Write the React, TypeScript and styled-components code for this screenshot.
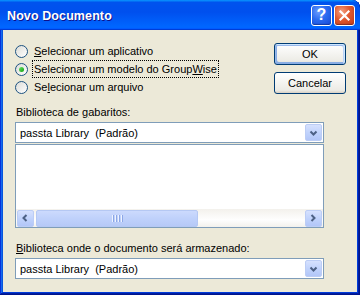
import React from "react";
import styled, { createGlobalStyle } from "styled-components";

const Global = createGlobalStyle`
  html, body { margin: 0; padding: 0; background: #ffffff; }
  body { font-family: "Liberation Sans", Arial, sans-serif; font-size: 11px; color: #000; }
  * { box-sizing: border-box; }
`;

const Window = styled.div`
  width: 360px;
  height: 295px;
  display: flex;
  flex-direction: column;
  background: #0831d9;
  border-top-right-radius: 8px;
  padding: 0 3px 3px 3px;
  box-shadow: inset -1px -1px #00138c, inset 1px 1px #0831d9, inset -2px -2px #001ea0,
    inset 2px 2px #166aee, inset -3px -3px #003bda, inset 3px 3px #0855dd;
  overflow: hidden;
`;

const TitleBar = styled.div`
  height: 30px;
  margin: 0 -3px;
  padding: 0 5px 0 7px;
  display: flex;
  align-items: center;
  gap: 2px;
  border-top-right-radius: 8px;
  background: linear-gradient(180deg, #0997ff, #0053ee 8%, #0050ee 40%, #06f 88%, #06f 93%, #005bff 95%, #003dd7 96%, #003dd7);
`;

const Title = styled.div`
  flex: 1;
  color: #fff;
  font-family: "Liberation Sans", Arial, sans-serif;
  font-weight: bold;
  font-size: 12.5px;
  letter-spacing: 0.1px;
  text-shadow: 1px 1px #0f1089;
  margin-top: 1px;
`;

const CaptionButton = styled.div<{ $kind: "help" | "close" }>`
  width: 21px;
  height: 21px;
  border: 1px solid #fff;
  border-radius: 3px;
  display: flex;
  align-items: center;
  justify-content: center;
  color: #fff;
  font-family: "Liberation Sans", Arial, sans-serif;
  font-weight: bold;
  font-size: 16px;
  background: ${(p) =>
    p.$kind === "help"
      ? "radial-gradient(circle at 35% 30%, #6b9cff 0%, #2b6bf0 45%, #1548d6 100%)"
      : "radial-gradient(circle at 35% 30%, #f5a080 0%, #e0582f 45%, #c2391a 100%)"};
  box-shadow: inset 0 -1px 1px rgba(0, 0, 40, 0.35);
`;

const Client = styled.div`
  flex: 1;
  background: #ece9d8;
  padding: 12px 11px 0 12px;
  display: flex;
  flex-direction: column;
`;

const TopSection = styled.div`
  display: flex;
  justify-content: space-between;
  height: 54px;
`;

const RadioList = styled.div`
  display: flex;
  flex-direction: column;
`;

const RadioRow = styled.div`
  height: 18px;
  display: flex;
  align-items: center;
  gap: 4px;
`;

const RadioCircle = styled.span<{ $checked?: boolean }>`
  width: 13px;
  height: 13px;
  border-radius: 50%;
  border: 1px solid #1d5281;
  background: linear-gradient(135deg, #dcdcd7, #ffffff);
  display: flex;
  align-items: center;
  justify-content: center;
  &::after {
    content: "";
    display: ${(p) => (p.$checked ? "block" : "none")};
    width: 5px;
    height: 5px;
    border-radius: 50%;
    background: linear-gradient(135deg, #6ee36a, #0a9e0a);
  }
`;

const RadioLabel = styled.span<{ $focused?: boolean }>`
  height: 18px;
  line-height: 16px;
  padding: 0 1px;
  border: 1px dotted ${(p) => (p.$focused ? "#000" : "transparent")};
  white-space: nowrap;
`;

const Key = styled.u`
  text-decoration: underline;
`;

const ButtonColumn = styled.div`
  display: flex;
  flex-direction: column;
  gap: 7px;
  padding-top: 1px;
`;

const PushButton = styled.div<{ $default?: boolean }>`
  width: 72px;
  height: 22px;
  border: 1px solid #003c74;
  border-radius: 3px;
  background: linear-gradient(180deg, #ffffff, #ecebe5 86%, #d8d0c4);
  display: flex;
  align-items: center;
  justify-content: center;
  font-size: 11px;
  box-shadow: ${(p) =>
    p.$default
      ? "inset -1px 1px #cee7ff, inset 1px 2px #98b8ea, inset -2px 2px #bcd4f6, inset 1px -1px #89ade4, inset 2px -2px #89ade4"
      : "none"};
`;

const FieldLabel = styled.div`
  height: 14px;
  line-height: 14px;
  padding-left: 1px;
  white-space: nowrap;
`;

const Combo = styled.div`
  width: 309px;
  height: 21px;
  border: 1px solid #7f9db9;
  background: #fff;
  display: flex;
  align-items: center;
  padding: 0 1px 0 4px;
`;

const ComboText = styled.span`
  flex: 1;
  white-space: pre;
`;

const ArrowButton = styled.div`
  width: 17px;
  height: 17px;
  border: 1px solid #bccdf5;
  border-radius: 2px;
  background: linear-gradient(180deg, #d6e1fe 0%, #c1d3fc 50%, #b2c6f8 100%);
  display: flex;
  align-items: center;
  justify-content: center;
`;

const ListBox = styled.div`
  width: 309px;
  height: 84px;
  margin-top: 1px;
  border: 1px solid #7f9db9;
  background: #fff;
  display: flex;
  flex-direction: column;
  justify-content: flex-end;
`;

const HScroll = styled.div`
  height: 18px;
  display: flex;
  align-items: center;
  gap: 2px;
  padding: 0 1px;
  background: linear-gradient(180deg, #f3f1ec 0%, #fefefe 60%, #f3f1ec 100%);
`;

const Thumb = styled.div`
  width: 162px;
  height: 17px;
  border: 1px solid #b5c8f3;
  border-radius: 2px;
  background: linear-gradient(180deg, #ccdafd 0%, #bfd1fb 50%, #b6c9f7 100%);
  display: flex;
  align-items: center;
  justify-content: center;
  gap: 1px;
`;

const Grip = styled.span`
  width: 1px;
  height: 7px;
  background: #eef3ff;
  box-shadow: 1px 0 #8ca7e6;
  margin-right: 1px;
`;

const Track = styled.div`
  flex: 1;
`;

const Chevron = ({ dir }: { dir: "down" | "left" | "right" }) => {
  const pts =
    dir === "down" ? "1.5,2.5 4.5,5.5 7.5,2.5" : dir === "left" ? "5.5,1 2.5,4 5.5,7" : "2.5,1 5.5,4 2.5,7";
  return (
    <svg width="9" height="8" viewBox="0 0 9 8">
      <polyline points={pts} fill="none" stroke="#4d6185" strokeWidth="2" />
    </svg>
  );
};

const CloseIcon = () => (
  <svg width="13" height="13" viewBox="0 0 13 13">
    <path d="M2.5 2.5 L10.5 10.5 M10.5 2.5 L2.5 10.5" stroke="#fff" strokeWidth="2.2" strokeLinecap="square" />
  </svg>
);

export default function App() {
  return (
    <>
      <Global />
      <Window>
        <TitleBar>
          <Title>Novo Documento</Title>
          <CaptionButton $kind="help">?</CaptionButton>
          <CaptionButton $kind="close">
            <CloseIcon />
          </CaptionButton>
        </TitleBar>
        <Client>
          <TopSection>
            <RadioList>
              <RadioRow>
                <RadioCircle />
                <RadioLabel>
                  <Key>S</Key>elecionar um aplicativo
                </RadioLabel>
              </RadioRow>
              <RadioRow>
                <RadioCircle $checked />
                <RadioLabel $focused>
                  Selecionar um modelo do Group<Key>W</Key>ise
                </RadioLabel>
              </RadioRow>
              <RadioRow>
                <RadioCircle />
                <RadioLabel>
                  Se<Key>l</Key>ecionar um arquivo
                </RadioLabel>
              </RadioRow>
            </RadioList>
            <ButtonColumn>
              <PushButton $default>OK</PushButton>
              <PushButton>Cancelar</PushButton>
            </ButtonColumn>
          </TopSection>
          <FieldLabel style={{ marginTop: 9, marginBottom: 3 }}>
            Biblioteca de <Key>g</Key>abaritos:
          </FieldLabel>
          <Combo>
            <ComboText>passta Library  (Padrão)</ComboText>
            <ArrowButton>
              <Chevron dir="down" />
            </ArrowButton>
          </Combo>
          <ListBox>
            <HScroll>
              <ArrowButton>
                <Chevron dir="left" />
              </ArrowButton>
              <Thumb>
                <Grip />
                <Grip />
                <Grip />
                <Grip />
              </Thumb>
              <Track />
              <ArrowButton>
                <Chevron dir="right" />
              </ArrowButton>
            </HScroll>
          </ListBox>
          <FieldLabel style={{ marginTop: 13, marginBottom: 3 }}>
            <Key>B</Key>iblioteca onde o documento será armazenado:
          </FieldLabel>
          <Combo>
            <ComboText>passta Library  (Padrão)</ComboText>
            <ArrowButton>
              <Chevron dir="down" />
            </ArrowButton>
          </Combo>
        </Client>
      </Window>
    </>
  );
}
